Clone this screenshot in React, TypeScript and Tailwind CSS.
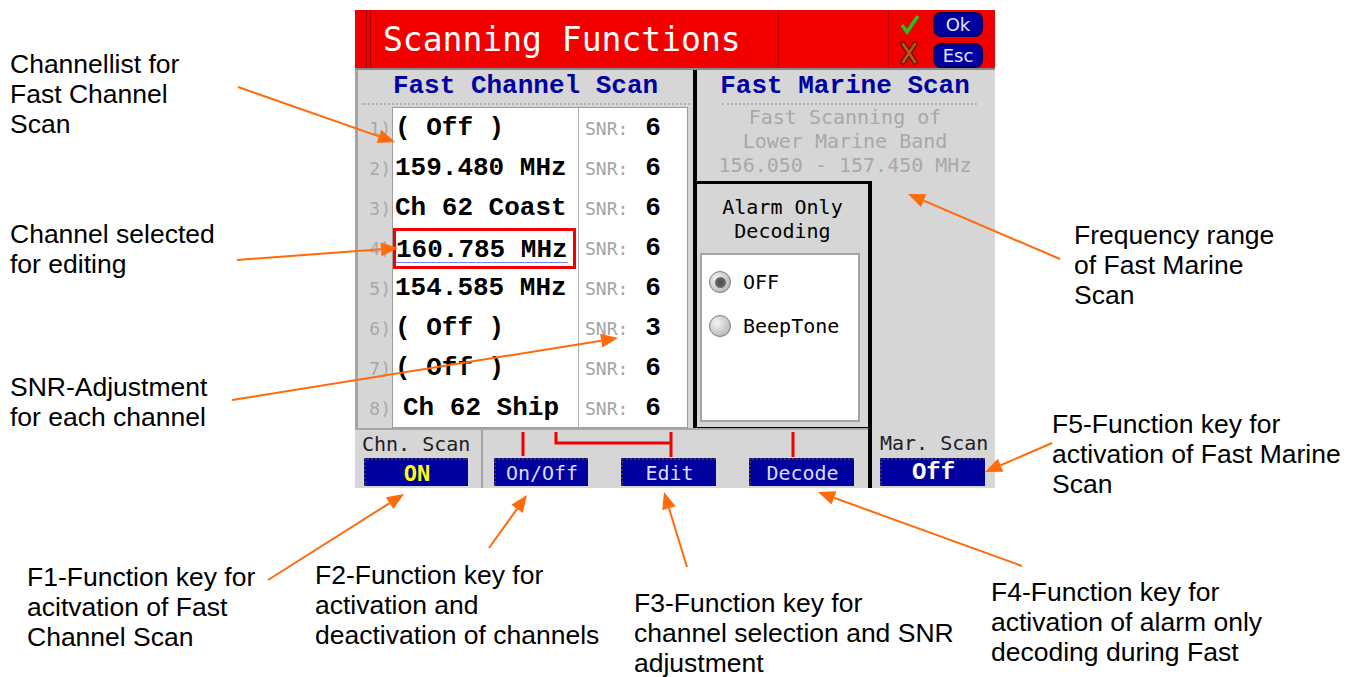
import React from 'react';

interface Channel {
  label: string;
  snr: number;
  selected?: boolean;
  indent?: boolean;
}

const channels: Channel[] = [
  { label: '( Off )', snr: 6 },
  { label: '159.480 MHz', snr: 6 },
  { label: 'Ch 62 Coast', snr: 6 },
  { label: '160.785 MHz', snr: 6, selected: true },
  { label: '154.585 MHz', snr: 6 },
  { label: '( Off )', snr: 3 },
  { label: '( Off )', snr: 6 },
  { label: 'Ch 62 Ship', snr: 6, indent: true },
];

// [x1, y1, tipX, tipY]
const arrows = [
  [238, 87, 395, 142],
  [237, 260, 398, 248],
  [232, 400, 618, 338],
  [268, 580, 404, 494],
  [489, 548, 527, 495],
  [687, 567, 664, 492],
  [1022, 566, 818, 492],
  [1052, 443, 985, 472],
  [1060, 259, 908, 194],
];

const Arrows = () => (
  <svg className="absolute inset-0 pointer-events-none" width={1358} height={677}>
    {arrows.map(([x1, y1, x2, y2], i) => {
      const len = Math.hypot(x2 - x1, y2 - y1);
      const dx = (x2 - x1) / len;
      const dy = (y2 - y1) / len;
      const bx = x2 - dx * 17;
      const by = y2 - dy * 17;
      const nx = -dy * 7;
      const ny = dx * 7;
      return (
        <g key={i}>
          <line x1={x1} y1={y1} x2={bx} y2={by} stroke="#ff6a0a" strokeWidth={2} />
          <polygon
            points={`${x2},${y2} ${bx + nx},${by + ny} ${bx - nx},${by - ny}`}
            fill="#ff6a0a"
          />
        </g>
      );
    })}
  </svg>
);

const Label = ({ className, lines }: { className: string; lines: string[] }) => (
  <div className={`absolute text-[26.5px] leading-[30px] text-black whitespace-nowrap ${className}`}>
    {lines.map((l, i) => (
      <div key={i}>{l}</div>
    ))}
  </div>
);

const FnButton = ({ children, className }: { children: React.ReactNode; className: string }) => (
  <div
    className={`h-[28px] bg-[#0000a0] border-t-2 border-l-2 border-dotted border-[#3a3a3a] flex items-center justify-center ${className}`}
  >
    {children}
  </div>
);

const Radio = ({ checked, label }: { checked?: boolean; label: string }) => (
  <div className="flex items-center h-[24px]">
    <div className="ml-[7px] w-[22px] h-[22px] rounded-full border border-[#7a7a7a] bg-[radial-gradient(circle_at_35%_35%,#f4f4f4,#a8a8a8)] flex items-center justify-center">
      {checked && <div className="w-[11px] h-[11px] rounded-full bg-[radial-gradient(circle,#4a4a4a,#7a7a7a)]" />}
    </div>
    <span className="ml-[12px] text-[20px] text-black">{label}</span>
  </div>
);

const Screen = () => (
  <div className="w-[640px] h-[478px] flex flex-col overflow-hidden font-['DejaVu_Sans_Mono',monospace]">
    {/* title bar */}
    <div className="h-[58px] bg-[#f20000] flex shrink-0">
      <div className="w-[18px] flex">
        <div className="w-[6px]" />
        <div className="w-px bg-[#a80000]" />
        <div className="w-[4px]" />
        <div className="w-px bg-[#a80000]" />
        <div className="w-[3px]" />
        <div className="w-px bg-[#a80000]" />
      </div>
      <div className="w-[405px] pl-[10px] flex items-center text-white text-[33px] leading-none">
        Scanning Functions
      </div>
      <div className="w-px bg-[#b80000]" />
      <div className="w-[109px]" />
      <div className="w-px bg-[#b80000]" />
      <div className="flex-1 flex pl-[11px]">
        <div className="w-[18px] flex flex-col">
          <svg width="20" height="22" viewBox="0 0 20 22" className="mt-[4px]">
            <polyline points="2,11 7,18 18,2" fill="none" stroke="#22c422" strokeWidth={3.5} />
          </svg>
          <svg width="18" height="24" viewBox="0 0 18 24" className="mt-[5px]">
            <g stroke="#3a1a00" strokeWidth={5} strokeLinecap="round">
              <line x1="3" y1="3" x2="15" y2="21" />
              <line x1="15" y1="3" x2="3" y2="21" />
            </g>
            <g stroke="#c0501a" strokeWidth={3} strokeLinecap="round">
              <line x1="3" y1="3" x2="15" y2="21" />
              <line x1="15" y1="3" x2="3" y2="21" />
            </g>
          </svg>
        </div>
        <div className="ml-[15px] flex flex-col pt-[2px] gap-[6px] font-['DejaVu_Sans',sans-serif]">
          <div className="w-[50px] h-[25px] rounded-[8px] bg-[#0000a0] border-2 border-[#000060] flex items-center justify-center text-[#e4e4ff] text-[18px]">
            Ok
          </div>
          <div className="w-[50px] h-[25px] rounded-[8px] bg-[#0000a0] border-2 border-[#000060] flex items-center justify-center text-[#e4e4ff] text-[18px]">
            Esc
          </div>
        </div>
      </div>
    </div>

    {/* body */}
    <div className="flex-1 bg-[#d6d6d6] border-t-2 border-[#8a8a8a] grid grid-cols-[338px_4px_171px_4px_123px] grid-rows-[111px_247px_60px]">
      {/* fast channel scan */}
      <div className="row-span-2 flex flex-col border-l-[3px] border-[#a4a4a4]">
        <div className="h-[33px] flex items-center justify-center font-['Liberation_Mono',monospace] font-bold text-[26px] text-[#0000a0] whitespace-pre">
          Fast Channel Scan
        </div>
        <div className="mx-[3px] border-t-2 border-dotted border-[#b4b4b4]" />
        <div className="flex mt-[2px]">
          <div className="w-[34px] flex flex-col pt-px">
            {channels.map((c, i) => (
              <div key={i} className="h-[40px] flex items-center justify-end pr-[1px] text-[18px] text-[#a8a8a8]">
                {i + 1})
              </div>
            ))}
          </div>
          <div className="w-[296px] h-[321px] bg-white border border-[#9c9c9c] grid grid-cols-[185px_1px_1fr]">
            <div className="flex flex-col">
              {channels.map((c, i) => (
                <div
                  key={i}
                  className={`h-[40px] flex items-center font-['Liberation_Mono',monospace] font-bold text-[26px] text-black whitespace-pre ${
                    c.indent ? 'pl-[10px]' : 'pl-[2px]'
                  }`}
                >
                  {c.selected ? (
                    <div className="-ml-[2px] w-[183px] h-[41px] border-[3px] border-[#f00000] flex items-center">
                      <span className="leading-[24px] pt-[4px] border-b border-[#8080ff]">{c.label}</span>
                    </div>
                  ) : (
                    c.label
                  )}
                </div>
              ))}
            </div>
            <div className="bg-[#b0b0b0]" />
            <div className="flex flex-col">
              {channels.map((c, i) => (
                <div key={i} className="h-[40px] flex items-center pl-[6px]">
                  <span className="text-[18px] text-[#a4a4a4]">SNR:</span>
                  <span className="ml-[17px] font-['Liberation_Mono',monospace] font-bold text-[26px] text-black">
                    {c.snr}
                  </span>
                </div>
              ))}
            </div>
          </div>
        </div>
      </div>

      <div className="row-span-2 bg-black" />

      {/* fast marine scan */}
      <div className="col-span-3 flex flex-col">
        <div className="h-[33px] flex items-center justify-center pr-[2px] font-['Liberation_Mono',monospace] font-bold text-[26px] text-[#0000a0] whitespace-pre">
          Fast Marine Scan
        </div>
        <div className="ml-[25px] mr-[18px] border-t-2 border-dotted border-[#b4b4b4]" />
        <div className="flex flex-col items-center text-[20px] leading-[24px] text-[#a8a8a8] pr-[2px] whitespace-pre">
          <div>Fast Scanning of</div>
          <div>Lower Marine Band</div>
          <div>156.050 - 157.450 MHz</div>
        </div>
      </div>

      {/* alarm only decoding */}
      <div className="col-start-3 row-start-2 border-t-[3px] border-b border-black flex flex-col">
        <div className="pt-[11px] flex flex-col items-center text-[20px] leading-[24px] text-black whitespace-pre">
          <div>Alarm Only</div>
          <div>Decoding</div>
        </div>
        <div className="mt-[10px] ml-[3px] w-[160px] h-[169px] bg-white border-2 border-[#a4a4a4] flex flex-col pt-[15px] gap-[20px]">
          <Radio checked label="OFF" />
          <Radio label="BeepTone" />
        </div>
      </div>

      <div className="col-start-4 row-start-2 row-span-2 border-t-[3px] border-black bg-black" />
      <div className="col-start-5 row-start-2" />

      {/* function keys */}
      <div className="col-span-3 row-start-3 flex border-t-2 border-[#a8a8a8]">
        <div className="w-[128px] flex flex-col">
          <div className="h-[28px] pl-[7px] flex items-center text-[20px] text-[#202020] whitespace-pre">Chn. Scan</div>
          <FnButton className="ml-[9px] w-[104px]">
            <span className="text-[22px] font-bold text-[#ffff00]">ON</span>
          </FnButton>
        </div>
        <div className="w-[2px] bg-[#a4a4a4]" />
        <div className="flex-1 flex flex-col">
          <svg width="385" height="28" className="shrink-0">
            <g stroke="#f00000" strokeWidth={3} fill="none">
              <line x1="40" y1="2" x2="40" y2="26" />
              <polyline points="73,2 73,13 188,13" />
              <line x1="188" y1="2" x2="188" y2="27" />
              <line x1="310" y1="2" x2="310" y2="27" />
            </g>
          </svg>
          <div className="flex text-[20px] text-[#dcdcff]">
            <FnButton className="ml-[11px] w-[94px]">On/Off</FnButton>
            <FnButton className="ml-[33px] w-[95px]">Edit</FnButton>
            <FnButton className="ml-[33px] w-[105px]">Decode</FnButton>
          </div>
        </div>
      </div>

      <div className="col-start-5 row-start-3 flex flex-col">
        <div className="h-[30px] pl-[8px] flex items-end text-[20px] text-[#202020] whitespace-pre">Mar. Scan</div>
        <FnButton className="ml-[8px] w-[105px]">
          <span className="font-['Liberation_Mono',monospace] font-bold text-[24px] text-white">Off</span>
        </FnButton>
      </div>
    </div>
  </div>
);

const App = () => {
  return (
    <div className="relative w-[1358px] h-[677px] bg-white overflow-hidden font-['Liberation_Sans',Arial,sans-serif]">
      <div className="pl-[355px] pt-[10px]">
        <Screen />
      </div>

      <Label className="left-[10px] top-[49px]" lines={['Channellist for', 'Fast Channel', 'Scan']} />
      <Label className="left-[10px] top-[219px]" lines={['Channel selected', 'for editing']} />
      <Label className="left-[10px] top-[372px]" lines={['SNR-Adjustment', 'for each channel']} />
      <Label className="left-[27px] top-[562px]" lines={['F1-Function key for', 'acitvation of Fast', 'Channel Scan']} />
      <Label
        className="left-[315px] top-[560px]"
        lines={['F2-Function key for', 'activation and', 'deactivation of channels']}
      />
      <Label
        className="left-[634px] top-[588px]"
        lines={['F3-Function key for', 'channel selection and SNR', 'adjustment']}
      />
      <Label
        className="left-[991px] top-[577px]"
        lines={['F4-Function key for', 'activation of alarm only', 'decoding during Fast']}
      />
      <Label
        className="left-[1052px] top-[409px]"
        lines={['F5-Function key for', 'activation of Fast Marine', 'Scan']}
      />
      <Label className="left-[1074px] top-[220px]" lines={['Frequency range', 'of Fast Marine', 'Scan']} />

      <Arrows />
    </div>
  );
};

export default App;
